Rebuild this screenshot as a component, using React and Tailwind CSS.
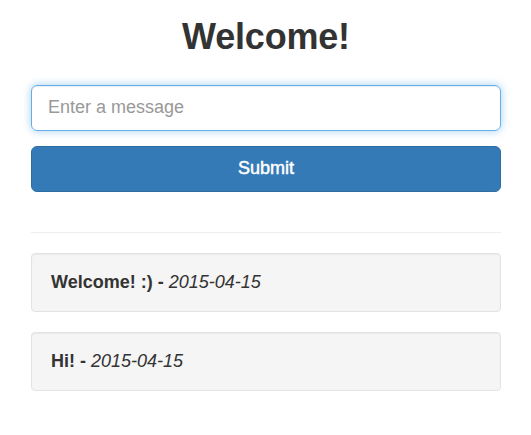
export default function App() {
  const messages = [
    { text: "Welcome! :)", date: "2015-04-15" },
    { text: "Hi!", date: "2015-04-15" },
  ];
  return (
    <div
      className="min-h-[435px] bg-white pl-[31px] pr-[30px] text-[#333]"
      style={{ fontFamily: '"Liberation Sans", Arial, sans-serif' }}
    >
      <h1 className="pt-[17px] text-center text-[36px] font-bold leading-[39.6px] tracking-[-0.2px]">
        Welcome!
      </h1>
      <div className="mt-[28px] flex flex-col gap-[15px]">
        <input
          type="text"
          placeholder="Enter a message"
          className="h-[46px] w-full rounded-[6px] border border-[#66afe9] px-[16px] text-[18px] text-[#555] outline-none shadow-[inset_0_1px_1px_rgba(0,0,0,0.075),0_0_8px_rgba(102,175,233,0.6)] placeholder:text-[#999]"
        />
        <button className="h-[46px] w-full rounded-[6px] border border-[#2e6da4] bg-[#337ab7] text-[18px] text-white [-webkit-text-stroke:0.5px_white]">
          Submit
        </button>
      </div>
      <hr className="mt-[40px] border-t border-[#eee]" />
      <div className="mt-[20px] flex flex-col gap-[20px]">
        {messages.map((m, i) => (
          <div
            key={i}
            className="rounded-[4px] border border-[#e3e3e3] bg-[#f5f5f5] p-[19px] shadow-[inset_0_1px_1px_rgba(0,0,0,0.05)]"
          >
            <div className="text-[18px] leading-[19px]">
              <b>{m.text} - </b>
              <i>{m.date}</i>
            </div>
          </div>
        ))}
      </div>
    </div>
  );
}
